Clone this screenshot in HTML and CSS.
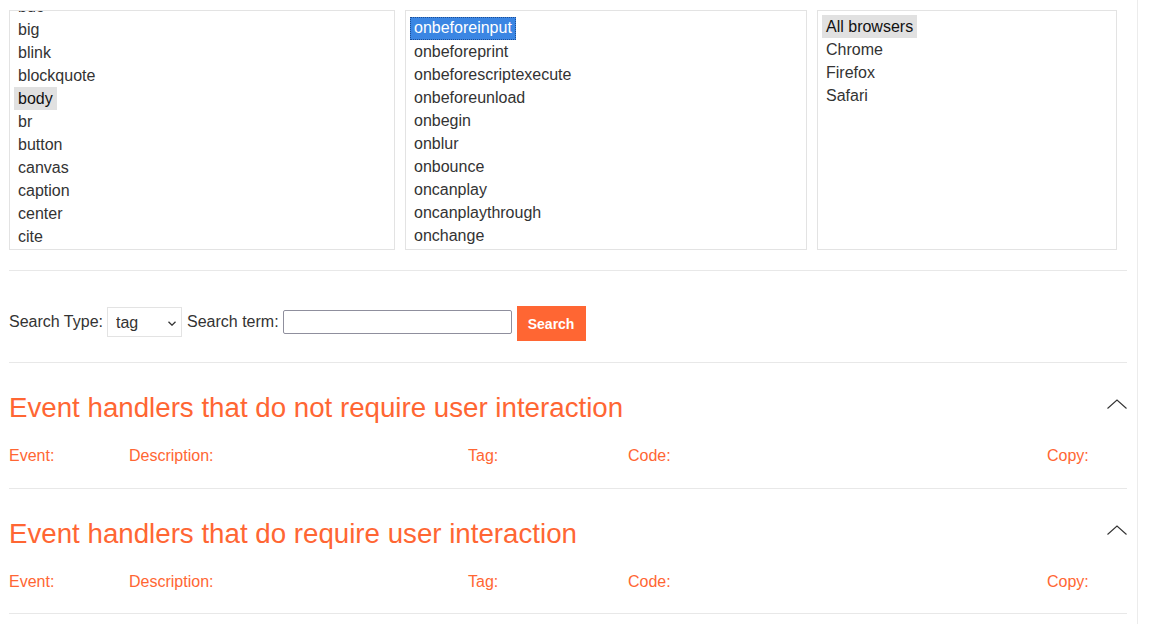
FILE: index.html
```html
<!DOCTYPE html>
<html lang="en">
<head>
<meta charset="utf-8">
<title>Event handlers</title>
<link rel="stylesheet" href="styles.css">
</head>
<body>
<div class="page">
  <main class="main">
    <div class="lists">
      <div class="listbox listbox-tags">
        <div class="options options-scrolled">
          <span class="opt">bdo</span>
          <span class="opt">big</span>
          <span class="opt">blink</span>
          <span class="opt">blockquote</span>
          <span class="opt opt-selected">body</span>
          <span class="opt">br</span>
          <span class="opt">button</span>
          <span class="opt">canvas</span>
          <span class="opt">caption</span>
          <span class="opt">center</span>
          <span class="opt">cite</span>
          <span class="opt">code</span>
          <span class="opt">col</span>
        </div>
      </div>
      <div class="listbox listbox-events">
        <div class="options options-events">
          <span class="opt opt-active">onbeforeinput</span>
          <span class="opt">onbeforeprint</span>
          <span class="opt">onbeforescriptexecute</span>
          <span class="opt">onbeforeunload</span>
          <span class="opt">onbegin</span>
          <span class="opt">onblur</span>
          <span class="opt">onbounce</span>
          <span class="opt">oncanplay</span>
          <span class="opt">oncanplaythrough</span>
          <span class="opt">onchange</span>
          <span class="opt">onclick</span>
          <span class="opt">onclose</span>
        </div>
      </div>
      <div class="listbox listbox-browsers">
        <div class="options">
          <span class="opt opt-selected">All browsers</span>
          <span class="opt">Chrome</span>
          <span class="opt">Firefox</span>
          <span class="opt">Safari</span>
        </div>
      </div>
    </div>

    <hr class="rule rule-top">

    <form class="search">
      <label class="search-label">Search Type:</label>
      <span class="select-wrap">
        <select class="select">
          <option>tag</option>
          <option>event</option>
        </select>
        <svg class="select-caret" width="8" height="5" viewBox="0 0 8 5" aria-hidden="true"><polyline points="0.5,0.8 4,4.2 7.5,0.8" fill="none" stroke="#333" stroke-width="1.3"/></svg>
      </span>
      <label class="search-label search-label-term">Search term:</label>
      <input class="term" type="text">
      <button class="btn" type="button">Search</button>
    </form>

    <hr class="rule">

    <section class="group">
      <div class="group-head">
        <h2 class="group-title">Event handlers that do not require user interaction</h2>
        <svg class="chevron" width="20" height="10" viewBox="0 0 20 10" aria-hidden="true"><polyline points="0.5,9.5 10,1 19.5,9.5" fill="none" stroke="#333" stroke-width="1.1"/></svg>
      </div>
      <div class="cols">
        <span>Event:</span>
        <span>Description:</span>
        <span>Tag:</span>
        <span>Code:</span>
        <span>Copy:</span>
      </div>
    </section>

    <hr class="rule">

    <section class="group group-last">
      <div class="group-head">
        <h2 class="group-title">Event handlers that do require user interaction</h2>
        <svg class="chevron" width="20" height="10" viewBox="0 0 20 10" aria-hidden="true"><polyline points="0.5,9.5 10,1 19.5,9.5" fill="none" stroke="#333" stroke-width="1.1"/></svg>
      </div>
      <div class="cols">
        <span>Event:</span>
        <span>Description:</span>
        <span>Tag:</span>
        <span>Code:</span>
        <span>Copy:</span>
      </div>
    </section>

    <hr class="rule">
  </main>
  <aside class="rail"></aside>
</div>
</body>
</html>
```

FILE: styles.css
```css
* { box-sizing: border-box; }

html, body {
  margin: 0;
  padding: 0;
  background: #fff;
  font-family: "Liberation Sans", Arial, sans-serif;
  font-size: 16px;
  color: #333;
}

.page {
  display: flex;
  min-height: 624px;
}

.main {
  width: 1137px;
  flex: none;
  padding: 10px 10px 0 9px;
}

.rail {
  flex: 1;
  border-left: 1px solid #ececec;
}

.lists {
  display: flex;
  gap: 10px;
}

.listbox {
  height: 240px;
  border: 1px solid #e3e3e3;
  padding: 4px;
  overflow: hidden;
  background: #fff;
}

.listbox-tags { width: 386px; }
.listbox-events { width: 402px; }
.listbox-browsers { width: 300px; }

.options {
  display: flex;
  flex-direction: column;
  align-items: flex-start;
}

.options-scrolled { margin-top: -20px; }
.options-events { margin-top: 2px; }

.opt {
  display: block;
  height: 23px;
  line-height: 23px;
  padding: 0 4px;
  white-space: nowrap;
  color: #333;
}

.opt-selected {
  background: #e1e1e1;
  color: #111;
}

.opt-active {
  background: #3b86e3;
  color: #fff;
  outline: 1px dotted #1d4e96;
  outline-offset: -1px;
  line-height: 22px;
}

.rule {
  border: 0;
  border-top: 1px solid #e8e8e8;
  margin: 0;
  height: 0;
}

.rule-top { margin-top: 20px; }

.search {
  display: flex;
  align-items: flex-start;
  gap: 4px;
  padding: 35px 0 21px;
}

.search-label {
  line-height: 18px;
  margin-top: 7px;
  color: #333;
}

.search-label-term { margin-left: 1px; }

.select-wrap {
  position: relative;
  display: inline-block;
  height: 30px;
  margin-top: 1px;
}

.select {
  appearance: none;
  -webkit-appearance: none;
  width: 75px;
  height: 30px;
  border: 1px solid #e3e3e3;
  border-radius: 0;
  background: #fff;
  padding: 0 0 0 8px;
  font-family: "Liberation Sans", Arial, sans-serif;
  font-size: 16px;
  color: #333;
  margin: 0;
}

.select-caret {
  position: absolute;
  right: 6px;
  top: 14px;
  pointer-events: none;
}

.term {
  width: 229px;
  height: 24px;
  margin: 4px 0 0 0;
  border: 1px solid #8f8f9d;
  border-radius: 2px;
  padding: 1px 2px;
  font-family: "Liberation Sans", Arial, sans-serif;
  font-size: 13px;
  background: #fff;
}

.btn {
  height: 35px;
  width: 69px;
  margin: 0 0 0 1px;
  border: 0;
  padding: 0 11px;
  background: #ff6633;
  color: #fff;
  font-family: "Liberation Sans", Arial, sans-serif;
  font-weight: bold;
  font-size: 14px;
  cursor: pointer;
}

.group {
  padding: 29px 0 23px;
}

.group-last {
  padding-bottom: 22px;
}

.group-head {
  display: flex;
  justify-content: space-between;
  align-items: center;
}

.group-title {
  margin: 0;
  font-weight: normal;
  font-size: 27.7px;
  line-height: 32px;
  color: #ff6633;
}

.chevron {
  display: block;
  margin-top: -9px;
}

.cols {
  display: grid;
  grid-template-columns: 120px 339px 160px 419px 1fr;
  margin-top: 23px;
  line-height: 18px;
  color: #ff6633;
}
```
